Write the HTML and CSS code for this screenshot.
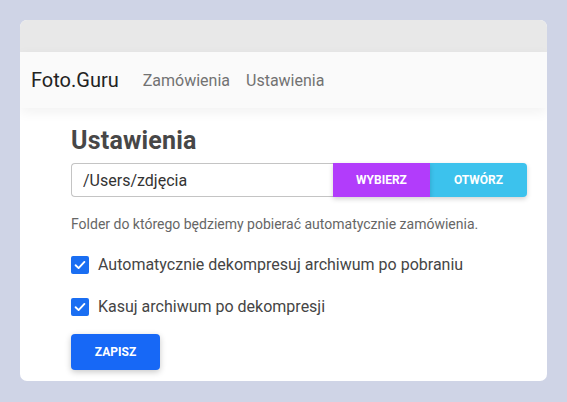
FILE: index.html
```html
<!DOCTYPE html>
<html lang="pl">
<head>
<meta charset="utf-8">
<title>Foto.Guru – Ustawienia</title>
<link rel="stylesheet" href="styles.css">
</head>
<body>
<div class="window">
  <div class="titlebar"></div>
  <nav class="navbar">
    <span class="brand">Foto.Guru</span>
    <a class="nav-link">Zamówienia</a>
    <a class="nav-link">Ustawienia</a>
  </nav>
  <main class="content">
    <h1 class="title">Ustawienia</h1>
    <div class="path-group">
      <input class="path-input" type="text" value="/Users/zdjęcia">
      <button class="btn btn-purple">Wybierz</button>
      <button class="btn btn-cyan">Otwórz</button>
    </div>
    <p class="help">Folder do którego będziemy pobierać automatycznie zamówienia.</p>
    <label class="check">
      <span class="box"><svg viewBox="0 0 16 16" width="16" height="16"><path d="M3.6 8.2 L6.6 11.1 L12.4 4.9" fill="none" stroke="#fff" stroke-width="1.9" stroke-linecap="round" stroke-linejoin="round"/></svg></span>
      <span class="check-label">Automatycznie dekompresuj archiwum po pobraniu</span>
    </label>
    <label class="check">
      <span class="box"><svg viewBox="0 0 16 16" width="16" height="16"><path d="M3.6 8.2 L6.6 11.1 L12.4 4.9" fill="none" stroke="#fff" stroke-width="1.9" stroke-linecap="round" stroke-linejoin="round"/></svg></span>
      <span class="check-label">Kasuj archiwum po dekompresji</span>
    </label>
    <button class="btn btn-save">Zapisz</button>
  </main>
</div>
</body>
</html>
```

FILE: styles.css
```css
* { box-sizing: border-box; }
html, body { margin: 0; }
body {
  background: #cfd4e6;
  padding: 20px;
  font-family: Roboto, "Liberation Sans", sans-serif;
}
.window {
  height: 361px;
  background: #fff;
  border-radius: 7px;
  overflow: hidden;
}
.titlebar {
  height: 32px;
  background: #e8e8e8;
}
.navbar {
  position: relative;
  height: 56px;
  background: #fafafa;
  display: flex;
  align-items: center;
  padding-left: 11px;
  box-shadow: 0 4px 12px rgba(0, 0, 0, 0.06);
}
.brand {
  font-size: 20px;
  color: #222;
  margin-right: 24px;
}
.nav-link {
  font-size: 16px;
  color: #727272;
  margin-right: 16px;
}
.content {
  padding: 18px 20px 0 51px;
}
.title {
  margin: 0;
  font-size: 25px;
  line-height: 30px;
  font-weight: 700;
  color: #474747;
  letter-spacing: 0.2px;
}
.path-group {
  display: flex;
  margin-top: 7px;
  height: 34px;
}
.path-input {
  flex: 1;
  min-width: 0;
  height: 34px;
  border: 1px solid #c4c4c4;
  border-right: none;
  border-radius: 4px 0 0 4px;
  padding: 0 11px;
  font-family: inherit;
  font-size: 16px;
  color: #333;
  background: #fff;
  outline: none;
}
.btn {
  border: none;
  font-family: inherit;
  font-weight: 700;
  font-size: 12px;
  text-transform: uppercase;
  color: #fff;
  cursor: pointer;
}
.btn-purple {
  width: 97px;
  background: #b23cfb;
  box-shadow: 0 2px 5px rgba(0, 0, 0, 0.18);
  position: relative;
}
.btn-cyan {
  width: 97px;
  background: #3cc2ed;
  border-radius: 0 4px 4px 0;
  box-shadow: 0 2px 5px rgba(0, 0, 0, 0.18);
}
.help {
  margin: 18px 0 0;
  font-size: 14px;
  line-height: 18px;
  color: #666;
}
.check {
  display: flex;
  align-items: center;
  gap: 9px;
  margin-top: 23px;
}
.check + .check { margin-top: 24px; }
.box {
  width: 18px;
  height: 18px;
  border-radius: 2px;
  background: #1a6ef2;
  display: flex;
  align-items: center;
  justify-content: center;
}
.check-label {
  font-size: 16px;
  line-height: 18px;
  color: #454545;
}
.btn-save {
  margin-top: 18px;
  width: 89px;
  height: 36px;
  background: #1768f6;
  border-radius: 4px;
  box-shadow: 0 2px 6px rgba(0, 0, 0, 0.22);
}
```
